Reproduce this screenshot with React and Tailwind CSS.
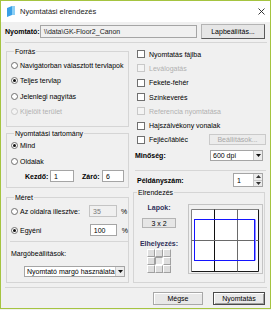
import React from "react";

const Radio = ({ checked, disabled, children, className = "" }) => (
  <div className={`flex items-center overflow-hidden whitespace-nowrap ${className}`}>
    <span
      className={`flex h-[7px] w-[7px] shrink-0 items-center justify-center rounded-full border ${
        disabled ? "border-[#c8c8c8] bg-[#f4f4f4]" : "border-[#6e6e6e] bg-white"
      }`}
    >
      {checked && <span className="h-[3px] w-[3px] rounded-full bg-[#111]" />}
    </span>
    <span className={`ml-[2px] ${disabled ? "text-[#b0b0b0]" : "text-black"}`}>{children}</span>
  </div>
);

const Check = ({ disabled, children, className = "" }) => (
  <div className={`flex h-[14.3px] items-center whitespace-nowrap ${className}`}>
    <span
      className={`h-[8px] w-[8px] shrink-0 border ${
        disabled ? "border-[#c8c8c8] bg-[#f4f4f4]" : "border-[#707070] bg-white"
      }`}
    />
    <span className={`ml-[4px] ${disabled ? "text-[#b0b0b0]" : "text-black"}`}>{children}</span>
  </div>
);

const Group = ({ title, className = "", children }) => (
  <fieldset className={`min-w-0 border border-[#d5d5d5] ${className}`}>
    <legend className="ml-[3px] px-[1px] leading-[9px] text-black">{title}</legend>
    {children}
  </fieldset>
);

const Box = ({ className = "", disabled, children }) => (
  <div
    className={`flex items-center overflow-hidden whitespace-nowrap border pl-[3px] ${
      disabled ? "border-[#c4c4c4] bg-[#f0f0f0] text-[#7a7a7a]" : "border-[#a5a5a5] bg-white text-black"
    } ${className}`}
  >
    {children}
  </div>
);

const Select = ({ className = "", children }) => (
  <div className={`flex items-stretch border border-[#a5a5a5] bg-white ${className}`}>
    <div className="flex flex-1 items-center overflow-hidden whitespace-nowrap pl-[2px]">{children}</div>
    <div className="flex w-[9px] shrink-0 items-center justify-center border-l border-[#c8c8c8] bg-[#ececec]">
      <svg width="5" height="3" viewBox="0 0 5 3">
        <path d="M0 0H5L2.5 3Z" fill="#111" />
      </svg>
    </div>
  </div>
);

const Cell = ({ pressed }) => (
  <div
    className={`h-[8px] w-[8px] border ${
      pressed
        ? "border-t-[#a0a0a0] border-l-[#a0a0a0] border-r-white border-b-white bg-[#e8e8e8]"
        : "border-t-white border-l-white border-r-[#a0a0a0] border-b-[#a0a0a0] bg-[#dedede]"
    }`}
  />
);

const Preview = () => (
  <svg width="75" height="70" viewBox="0 0 75 70" className="shrink-0">
    <rect x="0.5" y="0.5" width="74" height="69" fill="#f0f0f0" stroke="#c4c4c4" />
    <rect x="3" y="5" width="67" height="63" fill="#fff" />
    <path d="M3.5 67.5V5.5H70.5" fill="none" stroke="#808080" />
    <path d="M70.5 5.5V67.5H3.5" fill="none" stroke="#1a1a1a" />
    <path d="M26.5 5.5V67.5" stroke="#111" />
    <path d="M49.5 5.5V67.5" stroke="#6a6a6a" />
    <path d="M3.5 36.5H70.5" stroke="#6a6a6a" />
    <rect x="6.5" y="15.5" width="60" height="41" fill="none" stroke="#1414ff" />
    <path d="M67.5 15.5V56.5" stroke="#9090ff" />
  </svg>
);

export default function App() {
  return (
    <div className="h-[310px] w-[271px] bg-[#f0f0f0]">
      <div className="flex h-[309px] w-[271px] flex-col border border-[#a5c440] bg-[#f0f0f0] font-['Liberation_Sans',Arial,sans-serif] text-[7px] leading-[9px] text-black">
        {/* title bar */}
        <div className="flex h-[21px] shrink-0 items-center bg-white pl-[6px] pr-[5px]">
          <svg width="8" height="11" viewBox="0 0 8 11">
            <path d="M0 2L5 0V9L0 11Z" fill="#3aa0e6" />
            <path d="M5 0H8V9H5Z" fill="#8ccff5" />
          </svg>
          <span className="ml-[5px] text-[7.5px] text-[#222]">Nyomtatási elrendezés</span>
          <svg width="7" height="7" viewBox="0 0 7 7" className="ml-auto">
            <path d="M0.5 0.5L6.5 6.5M6.5 0.5L0.5 6.5" stroke="#222" strokeWidth="0.9" />
          </svg>
        </div>

        {/* printer row */}
        <div className="mt-[2px] flex h-[15px] items-center px-[4px]">
          <span className="w-[35px] font-bold">Nyomtató:</span>
          <Box className="h-[13px] w-[157px] !bg-[#f0f0f0] !text-[#222]">\\data\GK-Floor2_Canon</Box>
          <button className="ml-[4px] h-[15px] w-[64px] border border-[#b4b4b4] border-r-[#5a5a5a] border-b-[#5a5a5a] bg-[#e6e6e6]">
            Lapbeállítás...
          </button>
        </div>
        <div className="ml-[4px] mr-[3px] mt-[3px] h-px bg-[#d6d6d6]" />

        <div className="flex">
          {/* left column */}
          <div className="ml-[5px] flex w-[123px] flex-col">
            <Group title="Forrás" className="mt-[4px] h-[80px] pl-[4px] pt-[1.5px]">
              <Radio className="h-[15.5px]">Navigátorban választott tervlapok</Radio>
              <Radio className="h-[15.5px]" checked>Teljes tervlap</Radio>
              <Radio className="h-[15.5px]">Jelenlegi nagyítás</Radio>
              <Radio className="h-[15.5px]" disabled>Kijelölt terület</Radio>
            </Group>

            <Group title="Nyomtatási tartomány" className="mt-[1.5px] h-[59.5px] pl-[4px]">
              <Radio className="h-[16px]" checked>Mind</Radio>
              <Radio className="h-[16px]">Oldalak</Radio>
              <div className="mt-[0.5px] flex h-[12px] items-center">
                <span className="ml-[14px] w-[25px] font-bold">Kezdő:</span>
                <Box className="h-[12px] w-[24px]">1</Box>
                <span className="ml-[8px] w-[20px] font-bold">Záró:</span>
                <Box className="h-[12px] w-[22px]">6</Box>
              </div>
            </Group>

            <Group title="Méret" className="mt-[4.5px] h-[90.5px] pl-[4px]">
              <div className="mt-[3.5px] flex h-[12px] items-center">
                <Radio className="w-[78px]">Az oldalra illesztve:</Radio>
                <Box disabled className="h-[12px] w-[28px]">35</Box>
                <span className="ml-[4px]">%</span>
              </div>
              <div className="mt-[7px] flex h-[12px] items-center">
                <Radio className="w-[79px]" checked>Egyéni</Radio>
                <Box className="h-[12px] w-[27px]">100</Box>
                <span className="ml-[5px]">%</span>
              </div>
              <div className="ml-[-1px] mt-[5px] h-px bg-[#d6d6d6]" />
              <div className="mt-[6.5px] h-[9px]">Margóbeállítások:</div>
              <Select className="ml-[13px] mt-[8.5px] h-[11px] w-[101px]">Nyomtató margó használata</Select>
            </Group>
          </div>

          {/* right column */}
          <div className="ml-[4px] flex w-[133px] flex-col">
            <div className="mt-[4px] flex flex-col pl-[4px]">
              <Check>Nyomtatás fájlba</Check>
              <Check disabled>Leválogatás</Check>
              <Check>Fekete-fehér</Check>
              <Check>Színkeverés</Check>
              <Check disabled>Referencia nyomtatása</Check>
              <Check>Hajszálvékony vonalak</Check>
              <div className="flex items-center">
                <Check>Fejléc/lábléc</Check>
                <button className="ml-auto h-[11px] w-[57px] border border-[#cacaca] bg-[#ececec] text-[#a8a8a8]">
                  Beállítások...
                </button>
              </div>
            </div>
            <div className="ml-[2px] mt-[3px] flex h-[11px] items-center">
              <span className="w-[75px] font-bold">Minőség:</span>
              <Select className="h-[11px] w-[53px]">600 dpi</Select>
            </div>
            <div className="ml-[2px] mt-[9px] h-px bg-[#d6d6d6]" />
            <div className="mt-[2px] flex h-[14px] items-center pl-[4px]">
              <span className="w-[96px] font-bold">Példányszám:</span>
              <div className="flex h-[14px] w-[30px] border border-[#a5a5a5] bg-white">
                <span className="flex flex-1 items-center pl-[3px]">1</span>
                <div className="flex w-[9px] flex-col border-l border-[#c8c8c8] bg-[#ececec]">
                  <div className="flex flex-1 items-center justify-center border-b border-[#c8c8c8]">
                    <svg width="5" height="3" viewBox="0 0 5 3">
                      <path d="M0 3H5L2.5 0Z" fill="#333" />
                    </svg>
                  </div>
                  <div className="flex flex-1 items-center justify-center">
                    <svg width="5" height="3" viewBox="0 0 5 3">
                      <path d="M0 0H5L2.5 3Z" fill="#333" />
                    </svg>
                  </div>
                </div>
              </div>
            </div>

            <Group title="Elrendezés" className="mt-[0.5px] h-[95.5px] w-[132px]">
              <div className="flex items-start">
                <div className="ml-[5px] flex w-[40px] flex-col items-center">
                  <span className="mt-[6px] font-bold text-[#30305a]">Lapok:</span>
                  <div className="mt-[6.5px] flex h-[10px] w-[34px] items-center justify-center border border-[#b4b4b4] bg-[#e6e6e6]">
                    3 x 2
                  </div>
                  <span className="mt-[10.5px] font-bold text-[#30305a]">Elhelyezés:</span>
                  <div className="mt-[1.5px] grid grid-cols-3">
                    <Cell />
                    <Cell />
                    <Cell />
                    <Cell />
                    <Cell pressed />
                    <Cell />
                    <Cell />
                    <Cell />
                    <Cell />
                  </div>
                </div>
                <div className="ml-[9px] mt-[7.5px]">
                  <Preview />
                </div>
              </div>
            </Group>
          </div>
        </div>

        <div className="ml-[4px] mr-[3px] mt-[4px] h-px bg-[#d6d6d6]" />
        <div className="mt-[4px] flex justify-end pr-[5px]">
          <button className="h-[13px] w-[50px] border border-[#a8a8a8] bg-[#e8e8e8] shadow-[inset_1px_1px_0_#fff]">
            Mégse
          </button>
          <button className="ml-[10px] h-[13px] w-[52px] border border-[#4a4a4a] bg-[#e8e8e8] shadow-[inset_1px_1px_0_#fff,inset_-1px_-1px_0_#a0a0a0]">
            Nyomtatás
          </button>
        </div>
      </div>
    </div>
  );
}
